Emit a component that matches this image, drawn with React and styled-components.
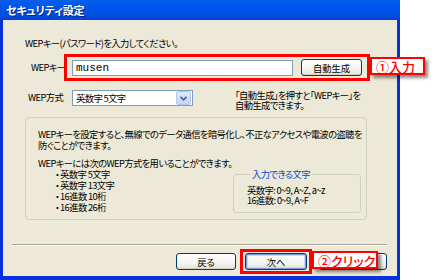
import React from 'react';
import styled, { createGlobalStyle } from 'styled-components';

const GlobalStyle = createGlobalStyle`
  body {
    margin: 0;
    background: #fff;
    font-family: "Noto Sans CJK JP", "Noto Sans", sans-serif;
    font-size: 9.3px;
    font-feature-settings: "palt";
    letter-spacing: -0.6px;
    color: #000;
  }
`;

const Window = styled.div`
  position: relative;
  width: 400px;
  height: 280px;
  box-sizing: border-box;
  display: flex;
  flex-direction: column;
  background: #ece9d8;
  border: 3px solid #0831d9;
  border-top: none;
  border-bottom-width: 4px;
`;

const TitleBar = styled.div`
  height: 22px;
  margin: 0 -3px;
  padding-left: 6px;
  display: flex;
  align-items: center;
  background: linear-gradient(180deg, #0a5fe8 0%, #0058ee 20%, #0053e6 60%, #0048d8 90%, #0a3fc8 100%);
  color: #fff;
  font-size: 11px;
  font-weight: bold;
  letter-spacing: -0.2px;
  text-shadow: 1px 1px 0 #0a1e7a;
`;

const Content = styled.div`
  flex: 1;
  display: flex;
  flex-direction: column;
  padding: 17px 10px 2px 9px;
`;

const Main = styled.div`
  display: flex;
  flex-direction: column;
  padding-left: 13px;
`;

const Text = styled.div`
  line-height: 12px;
  white-space: nowrap;
`;

const FormRow = styled.div`
  display: flex;
  align-items: ${p => (p.$top ? 'flex-start' : 'center')};
  margin-top: ${p => p.$mt}px;
  padding-left: ${p => p.$pl}px;
`;

const Label = styled.span`
  width: ${p => p.$w}px;
  white-space: nowrap;
  line-height: 15px;
`;

const Highlight = styled.div`
  position: relative;
  display: flex;
  align-items: center;
  gap: ${p => p.$gap || 0}px;
  margin-left: ${p => p.$ml || 0}px;
  border: 3px solid #ff0000;
  padding: ${p => p.$pad};
`;

const Callout = styled.div`
  position: absolute;
  z-index: 2;
  left: calc(100% + 3px);
  top: ${p => p.$top}px;
  width: ${p => p.$w}px;
  height: 18px;
  box-sizing: border-box;
  display: flex;
  align-items: center;
  padding-left: 4px;
  background: #fff;
  border: 2px solid #ff0000;
  color: #ff0000;
  font-size: 13px;
  font-weight: 500;
  letter-spacing: 0;
  white-space: nowrap;
  box-shadow: 3px 3px 3px rgba(0, 0, 0, 0.45);
`;

const Input = styled.div`
  width: 221px;
  height: 16px;
  box-sizing: border-box;
  border: 1px solid #7f9db9;
  background: #fff;
  padding-left: 3px;
  font-family: "Liberation Mono", monospace;
  font-size: 11px;
  letter-spacing: 0;
  line-height: 14px;
`;

const Button = styled.div`
  width: ${p => p.$w}px;
  height: 17px;
  box-sizing: border-box;
  display: flex;
  align-items: center;
  justify-content: center;
  margin-left: ${p => p.$ml || 0}px;
  border: 1px solid #003c74;
  border-radius: 3px;
  background: linear-gradient(180deg, #ffffff 0%, #f4f4f0 60%, #e3e0d6 100%);
  box-shadow: ${p => (p.$default ? 'inset 0 0 0 1px #7a9be6, inset 0 0 0 2px #c8d8f8' : 'inset 0 -1px 0 #d6d0c5')};
  white-space: nowrap;
  letter-spacing: 0;
`;

const Select = styled.div`
  width: 121px;
  height: 16px;
  box-sizing: border-box;
  display: flex;
  align-items: center;
  justify-content: space-between;
  border: 1px solid #7f9db9;
  background: #fff;
  padding: 1px 1px 1px 3px;
`;

const DropButton = styled.div`
  width: 13px;
  height: 12px;
  display: flex;
  align-items: center;
  justify-content: center;
  border: 1px solid #b4c8f6;
  border-radius: 2px;
  background: linear-gradient(180deg, #dfe9fe 0%, #c4d4fb 100%);
`;

const Help = styled.div`
  margin-left: 42px;
  line-height: 10px;
  white-space: nowrap;
`;

const GroupBox = styled.div`
  margin-top: 7px;
  width: 342px;
  box-sizing: border-box;
  border: 1px solid #d0d0bf;
  border-radius: 4px;
  padding: 11px 5px 6px 12px;
`;

const Para = styled.div`
  line-height: 11px;
  white-space: nowrap;
`;

const Split = styled.div`
  display: flex;
  align-items: flex-start;
  margin-top: 7px;
`;

const Column = styled.div`
  flex: 1;
  min-width: 0;
`;

const Bullets = styled.ul`
  margin: 0;
  padding: 0 0 0 17px;
  list-style: none;
  line-height: 11px;
  li::before {
    content: "・";
    margin-right: 1px;
  }
`;

const CharSet = styled.fieldset`
  flex-shrink: 0;
  margin: 11px 0 0;
  width: 128px;
  min-width: 128px;
  box-sizing: border-box;
  border: 1px solid #d0d0bf;
  border-radius: 3px;
  padding: 5px 4px 7px 13px;
  line-height: 10px;
  white-space: nowrap;
`;

const Legend = styled.legend`
  margin-left: 3px;
  padding: 0 2px;
  color: #0046d5;
  line-height: 11px;
`;

const Separator = styled.div`
  margin-top: 24px;
  height: 2px;
  border-top: 1px solid #aca899;
  background: #fff;
  box-sizing: border-box;
`;

const ButtonRow = styled.div`
  display: flex;
  justify-content: flex-end;
  align-items: center;
  margin-top: 3px;
`;

const Chevron = () => (
  <svg width="7" height="5" viewBox="0 0 7 5">
    <path d="M0.5 0.8 L3.5 3.8 L6.5 0.8" fill="none" stroke="#4d6185" strokeWidth="1.6" />
  </svg>
);

export default function App() {
  return (
    <>
      <GlobalStyle />
      <Window>
        <TitleBar>セキュリティ設定</TitleBar>
        <Content>
          <Main>
            <Text>WEPキー(パスワード)を入力してください。</Text>
            <FormRow $mt={5} $pl={6}>
              <Label $w={33}>WEPキー</Label>
              <Highlight $pad="2px 5px 2px 5px" $gap={8}>
                <Input>musen</Input>
                <Button $w={61}>自動生成</Button>
                <Callout $top={0} $w={55}>①入力</Callout>
              </Highlight>
            </FormRow>
            <FormRow $mt={9} $pl={3} $top>
              <Label $w={44}>WEP方式</Label>
              <Select>
                <span>英数字 5文字</span>
                <DropButton>
                  <Chevron />
                </DropButton>
              </Select>
              <Help>
                「自動生成」を押すと「WEPキー」を
                <br />
                自動生成できます。
              </Help>
            </FormRow>
            <GroupBox>
              <Para>WEPキーを設定すると、無線でのデータ通信を暗号化し、不正なアクセスや電波の盗聴を</Para>
              <Para>防ぐことができます。</Para>
              <Split>
                <Column>
                  <Para>WEPキーには次のWEP方式を用いることができます。</Para>
                  <Bullets>
                    <li>英数字 5文字</li>
                    <li>英数字 13文字</li>
                    <li>16進数 10桁</li>
                    <li>16進数 26桁</li>
                  </Bullets>
                </Column>
                <CharSet>
                  <Legend>入力できる文字</Legend>
                  <div>英数字: 0~9, A~Z, a~z</div>
                  <div>16進数: 0~9, A~F</div>
                </CharSet>
              </Split>
            </GroupBox>
          </Main>
          <Separator />
          <ButtonRow>
            <Button $w={60}>戻る</Button>
            <Highlight $pad="1px 2px" $ml={4}>
              <Button $w={62} $default>次へ</Button>
              <Callout $top={-1} $w={66}>②クリック</Callout>
            </Highlight>
            <Button $w={68} $ml={7} />
          </ButtonRow>
        </Content>
      </Window>
    </>
  );
}
